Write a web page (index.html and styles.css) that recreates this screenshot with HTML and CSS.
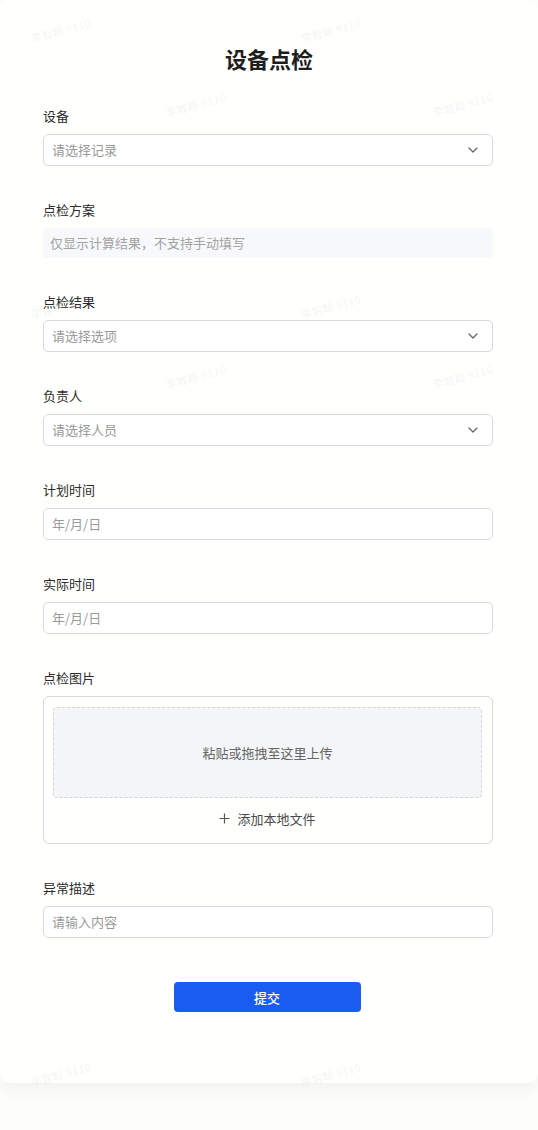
FILE: index.html
```html
<!DOCTYPE html>
<html lang="zh-CN">
<head>
<meta charset="utf-8">
<title>设备点检</title>
<link rel="stylesheet" href="styles.css">
</head>
<body>
<div class="page">
  <div class="card">
    <h1 class="title">设备点检</h1>
    <form class="form">
      <div class="field">
        <div class="label">设备</div>
        <div class="control select">
          <span class="placeholder">请选择记录</span>
          <svg class="chev" width="10" height="6" viewBox="0 0 10 6"><polyline points="1,1 5,5 9,1" fill="none" stroke="#666" stroke-width="1.3" stroke-linecap="round" stroke-linejoin="round"/></svg>
        </div>
      </div>
      <div class="field">
        <div class="label">点检方案</div>
        <div class="readonly">仅显示计算结果，不支持手动填写</div>
      </div>
      <div class="field">
        <div class="label">点检结果</div>
        <div class="control select">
          <span class="placeholder">请选择选项</span>
          <svg class="chev" width="10" height="6" viewBox="0 0 10 6"><polyline points="1,1 5,5 9,1" fill="none" stroke="#666" stroke-width="1.3" stroke-linecap="round" stroke-linejoin="round"/></svg>
        </div>
      </div>
      <div class="field">
        <div class="label">负责人</div>
        <div class="control select">
          <span class="placeholder">请选择人员</span>
          <svg class="chev" width="10" height="6" viewBox="0 0 10 6"><polyline points="1,1 5,5 9,1" fill="none" stroke="#666" stroke-width="1.3" stroke-linecap="round" stroke-linejoin="round"/></svg>
        </div>
      </div>
      <div class="field">
        <div class="label">计划时间</div>
        <div class="control"><span class="placeholder">年/月/日</span></div>
      </div>
      <div class="field">
        <div class="label">实际时间</div>
        <div class="control"><span class="placeholder">年/月/日</span></div>
      </div>
      <div class="field">
        <div class="label">点检图片</div>
        <div class="upload">
          <div class="drop">粘贴或拖拽至这里上传</div>
          <div class="add">
            <svg width="11" height="11" viewBox="0 0 11 11"><path d="M5.5 0.5v10M0.5 5.5h10" stroke="#555" stroke-width="1.2" fill="none"/></svg>
            <span>添加本地文件</span>
          </div>
        </div>
      </div>
      <div class="field">
        <div class="label">异常描述</div>
        <div class="control"><span class="placeholder">请输入内容</span></div>
      </div>
      <div class="actions">
        <button type="button" class="submit">提交</button>
      </div>
    </form>
  </div>
  <div class="watermarks" aria-hidden="true">
    <span class="wm" style="left:30px;top:22px">李智超 9110</span>
    <span class="wm" style="left:300px;top:22px">李智超 9110</span>
    <span class="wm" style="left:165px;top:96px">李智超 9110</span>
    <span class="wm" style="left:432px;top:96px">李智超 9110</span>
    <span class="wm" style="left:30px;top:298px">李智超 9110</span>
    <span class="wm" style="left:300px;top:298px">李智超 9110</span>
    <span class="wm" style="left:165px;top:368px">李智超 9110</span>
    <span class="wm" style="left:432px;top:368px">李智超 9110</span>
    <span class="wm" style="left:30px;top:1066px">李智超 9110</span>
    <span class="wm" style="left:300px;top:1066px">李智超 9110</span>
  </div>
</div>
</body>
</html>
```
FILE: styles.css
```css
* { box-sizing: border-box; }
html, body {
  margin: 0;
  padding: 0;
  background: #fdfdfc;
  font-family: "Noto Sans CJK SC", "Noto Sans", sans-serif;
}
.page {
  position: relative;
  width: 538px;
  height: 1130px;
  overflow: hidden;
}
.card {
  background: #fffffe;
  border-radius: 10px;
  box-shadow: 0 8px 16px rgba(0, 0, 0, 0.045);
  padding: 43px 45px 71px 43px;
}
.title {
  margin: 0 0 34px;
  text-align: center;
  font-size: 22px;
  line-height: 30px;
  font-weight: 700;
  color: #1f1f1f;
  padding-left: 2px;
}
.form {
  display: flex;
  flex-direction: column;
}
.field {
  margin-bottom: 35px;
}
.label {
  font-size: 13px;
  line-height: 17px;
  color: #2b2b2b;
  margin-bottom: 10px;
}
.control {
  height: 32px;
  border: 1px solid #d9d9d9;
  border-radius: 5px;
  background: #fff;
  display: flex;
  align-items: center;
  justify-content: space-between;
  padding: 0 14px 1px 8px;
}
.placeholder {
  font-size: 13px;
  color: #9a9a9a;
}
.chev { display: block; }
.readonly {
  height: 30px;
  background: #f7f8fa;
  border-radius: 3px;
  font-size: 13px;
  color: #a3a3a3;
  display: flex;
  align-items: center;
  padding-left: 7px;
  padding-bottom: 1px;
}
.upload {
  height: 148px;
  border: 1px solid #d9d9d9;
  border-radius: 6px;
  padding: 10px 10px 0 9px;
  display: flex;
  flex-direction: column;
}
.drop {
  height: 91px;
  background: #f3f5f7;
  border: 1px dashed #d3d6da;
  border-radius: 4px;
  display: flex;
  align-items: center;
  justify-content: center;
  font-size: 13px;
  color: #666;
}
.add {
  flex: 1;
  display: flex;
  align-items: center;
  justify-content: center;
  gap: 7px;
  font-size: 13px;
  color: #4a4a4a;
  padding-bottom: 5px;
}
.add svg { display: block; }
.actions {
  display: flex;
  justify-content: center;
  margin-top: 9px;
}
.submit {
  width: 187px;
  height: 30px;
  border: none;
  border-radius: 4px;
  background: #1a5cf0;
  color: #fff;
  font-family: "Noto Sans CJK SC", "Noto Sans", sans-serif;
  font-size: 13px;
  font-weight: 500;
  margin-left: -2px;
}
.watermarks {
  position: absolute;
  inset: 0;
  pointer-events: none;
}
.wm {
  position: absolute;
  font-size: 11px;
  font-weight: 700;
  color: rgba(0, 0, 0, 0.045);
  transform: rotate(-15deg);
  white-space: nowrap;
}
```
